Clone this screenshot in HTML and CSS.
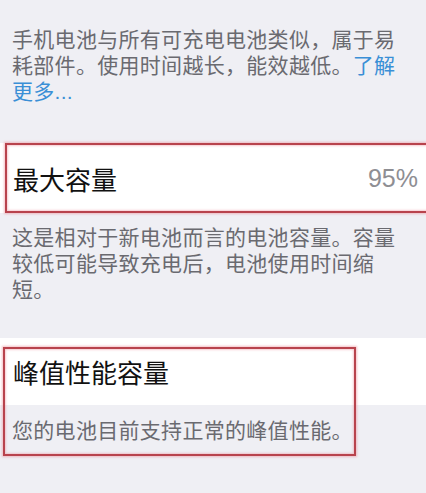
FILE: index.html
```html
<!DOCTYPE html>
<html lang="zh-CN">
<head>
    <meta charset="UTF-8">
    <meta name="viewport" content="width=426, initial-scale=1.0">
    <title>电池健康</title>
    <link rel="stylesheet" href="styles.css">
</head>
<body>
    <p class="note">手机电池与所有可充电电池类似，属于易耗部件。使用时间越长，能效越低。<span class="link">了解更多...</span></p>

    <div class="cell cell-first">
        <span class="cell-title">最大容量</span>
        <span class="cell-value">95%</span>
        <div class="mark mark-wide"></div>
    </div>
    <p class="note note-sub">这是相对于新电池而言的电池容量。容量较低可能导致充电后，电池使用时间缩短。</p>

    <div class="group">
        <div class="cell">
            <span class="cell-title">峰值性能容量</span>
        </div>
        <p class="note note-foot">您的电池目前支持正常的峰值性能。</p>
        <div class="mark mark-peak"></div>
    </div>
</body>
</html>
```

FILE: styles.css
```css
html {
    height: 100%;
}

body {
    margin: 0;
    padding: 0 0 40px;
    min-height: 100%;
    box-sizing: border-box;
    background-color: #efeff4;
    font-family: "Liberation Sans", "Noto Sans CJK SC", sans-serif;
}

.note {
    margin: 27px 0 0;
    padding: 0 24px 0 12px;
    font-size: 21px;
    line-height: 26px;
    letter-spacing: 0.3px;
    color: #6a6a70;
}

.link {
    color: #3a8fd6;
}

.cell {
    position: relative;
    display: flex;
    align-items: center;
    justify-content: space-between;
    height: 67px;
    padding: 0 8px 0 13px;
    background-color: #fff;
}

.cell-first {
    margin-top: 38px;
    height: 70px;
}

.cell-title {
    font-size: 26px;
    color: #111;
}

.cell-value {
    font-size: 25px;
    color: #8e8e93;
}

.note-sub {
    margin-top: 12px;
}

.group {
    position: relative;
    margin-top: 35px;
    padding-bottom: 14px;
}

.note-foot {
    margin-top: 13px;
}

/* red outline drawn over a row */
.mark {
    position: absolute;
    box-sizing: border-box;
    border: 2px solid #b8434d;
    box-shadow: 0 0 2px 1px rgba(235, 140, 150, 0.55), inset 0 0 2px 1px rgba(235, 140, 150, 0.45);
    pointer-events: none;
}

.mark-wide {
    top: 0;
    bottom: 0;
    left: 5px;
    right: -6px;
}

.mark-peak {
    top: 9px;
    left: 3px;
    width: 353px;
    height: 109px;
}
```
